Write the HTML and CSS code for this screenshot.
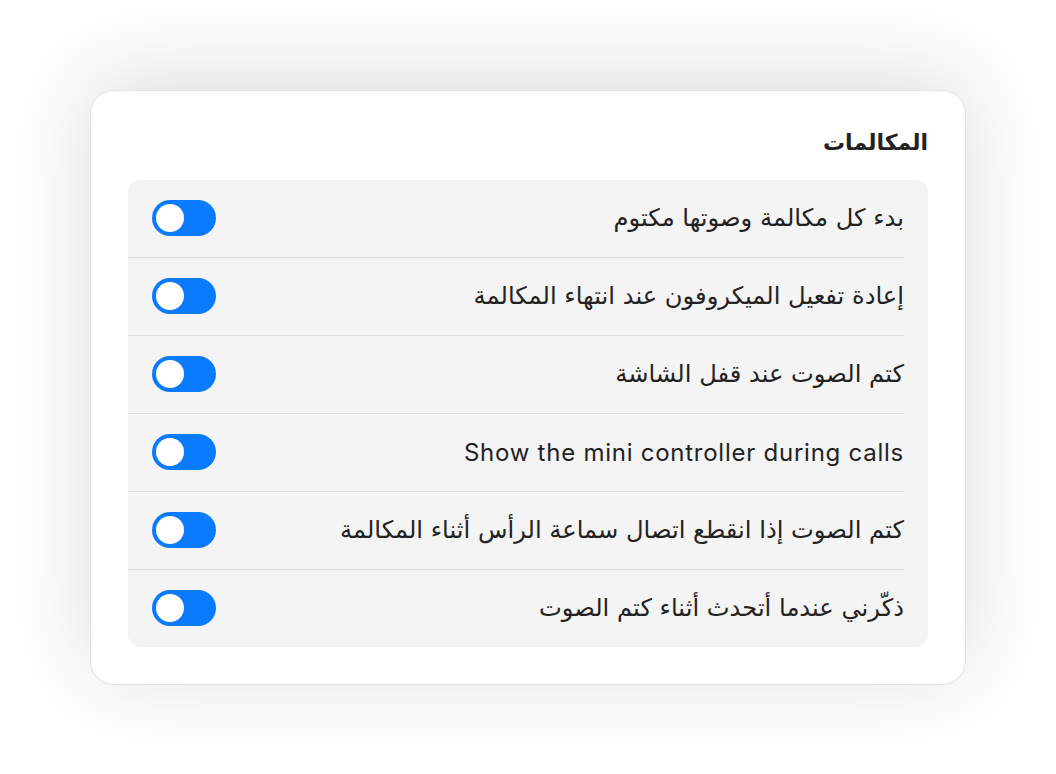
FILE: index.html
```html
<!DOCTYPE html>
<html lang="ar" dir="rtl">
<head>
    <meta charset="UTF-8">
    <meta name="viewport" content="width=device-width, initial-scale=1.0">
    <title>المكالمات</title>
    <link rel="stylesheet" href="styles.css">
</head>
<body>
    <div class="card">
        <h2 class="section-title">المكالمات</h2>
        <ul class="settings-list">
            <li class="setting">
                <span class="label">بدء كل مكالمة وصوتها مكتوم</span>
                <span class="toggle"><span class="knob"></span></span>
            </li>
            <li class="setting">
                <span class="label">إعادة تفعيل الميكروفون عند انتهاء المكالمة</span>
                <span class="toggle"><span class="knob"></span></span>
            </li>
            <li class="setting">
                <span class="label">كتم الصوت عند قفل الشاشة</span>
                <span class="toggle"><span class="knob"></span></span>
            </li>
            <li class="setting">
                <span class="label label-latin" dir="ltr">Show the mini controller during calls</span>
                <span class="toggle"><span class="knob"></span></span>
            </li>
            <li class="setting">
                <span class="label">كتم الصوت إذا انقطع اتصال سماعة الرأس أثناء المكالمة</span>
                <span class="toggle"><span class="knob"></span></span>
            </li>
            <li class="setting">
                <span class="label">ذكّرني عندما أتحدث أثناء كتم الصوت</span>
                <span class="toggle"><span class="knob"></span></span>
            </li>
        </ul>
    </div>
</body>
</html>
```

FILE: styles.css
```css
body {
    margin: 0;
    min-height: 100vh;
    display: flex;
    align-items: center;
    justify-content: center;
    background: #ffffff;
    font-family: 'DejaVu Sans', 'Inter', sans-serif;
    color: #222;
}

.card {
    width: 800px;
    padding: 37px;
    background: #fff;
    border: 1px solid #e3e3e3;
    border-radius: 24px;
    box-shadow: 0 -12px 90px rgba(0, 0, 0, 0.14);
}

.section-title {
    margin: 0 0 22px;
    font-size: 22px;
    line-height: 30px;
    font-weight: 700;
    color: #222;
}

.settings-list {
    list-style: none;
    margin: 0;
    padding: 0;
    background: #f4f4f4;
    border-radius: 12px;
}

.setting {
    display: flex;
    align-items: center;
    justify-content: space-between;
    height: 77px;
    margin-right: 24px;
    padding-left: 24px;
    border-bottom: 1px solid #dcdcdc;
}

.setting:last-child {
    border-bottom: none;
}

.label {
    font-size: 24.2px;
    color: #222;
}

.label-latin {
    font-family: 'Inter', sans-serif;
    font-size: 24px;
    letter-spacing: 0.75px;
}

.toggle {
    display: flex;
    align-items: center;
    width: 64px;
    height: 36px;
    border-radius: 18px;
    background: #0a7aff;
    direction: ltr;
}

.knob {
    width: 28px;
    height: 28px;
    margin-left: 4px;
    border-radius: 50%;
    background: #fff;
}
```
